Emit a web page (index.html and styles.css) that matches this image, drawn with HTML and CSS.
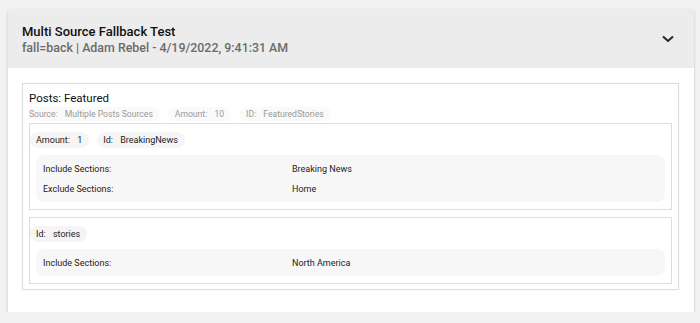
FILE: index.html
```html
<!DOCTYPE html>
<html lang="en">
<head>
    <meta charset="UTF-8">
    <title>Multi Source Fallback Test</title>
    <link rel="stylesheet" href="styles.css">
</head>
<body>
    <div class="card">
        <div class="card-header">
            <div class="titles">
                <h1>Multi Source Fallback Test</h1>
                <p>fall=back | Adam Rebel - 4/19/2022, 9:41:31 AM</p>
            </div>
            <svg class="chevron" width="12" height="8" viewBox="0 0 12 8">
                <path d="M1 1.5 L6 6 L11 1.5" fill="none" stroke="#222" stroke-width="2"/>
            </svg>
        </div>

        <div class="card-body">
            <div class="posts">
                <div class="posts-title">Posts: Featured</div>
                <div class="meta">
                    <span class="meta-chip">Source: <b>Multiple Posts Sources</b></span>
                    <span class="meta-chip">Amount: <b>10</b></span>
                    <span class="meta-chip">ID: <b>FeaturedStories</b></span>
                </div>

                <div class="source">
                    <div class="chips">
                        <span class="chip">Amount: <b>1</b></span>
                        <span class="chip">Id: <b>BreakingNews</b></span>
                    </div>
                    <div class="sections">
                        <div class="row"><span>Include Sections:</span><span>Breaking News</span></div>
                        <div class="row"><span>Exclude Sections:</span><span>Home</span></div>
                    </div>
                </div>

                <div class="source">
                    <div class="chips">
                        <span class="chip">Id: <b>stories</b></span>
                    </div>
                    <div class="sections">
                        <div class="row"><span>Include Sections:</span><span>North America</span></div>
                    </div>
                </div>
            </div>
        </div>
    </div>
</body>
</html>
```

FILE: styles.css
```css
body {
    margin: 0;
    padding: 10px 6px 0 8px;
    background: #f2f2f2;
    font-family: Roboto, "Liberation Sans", sans-serif;
    color: #222;
}

.card {
    background: #fff;
    box-shadow: 0 1px 3px rgba(0, 0, 0, 0.18);
}

.card-header {
    display: flex;
    align-items: center;
    justify-content: space-between;
    height: 58px;
    padding: 0 20px 0 14px;
    background: #ececec;
}

.card-header h1 {
    margin: 0;
    font-size: 13px;
    font-weight: 500;
    line-height: 16px;
    color: #111;
}

.card-header p {
    margin: 0;
    font-size: 12.4px;
    font-weight: 500;
    line-height: 15px;
    color: #6b6b6b;
}

.chevron {
    display: block;
}

.card-body {
    padding: 15px 15px 22px 14px;
}

.posts {
    border: 1px solid #ddd;
    box-shadow: 0 0 1px rgba(0, 0, 0, 0.08);
    padding: 6px 6px 5px 6px;
}

.posts-title {
    font-size: 11.5px;
    line-height: 16px;
    color: #111;
}

.meta {
    display: flex;
    gap: 8px;
    margin: 1px 0 2px;
}

.meta-chip {
    background: #fafafa;
    border-radius: 8px;
    padding: 0 7px 0 0;
    font-size: 8.6px;
    line-height: 14px;
    color: #999;
}

.meta-chip + .meta-chip {
    padding-left: 7px;
}

.meta-chip b,
.chip b {
    font-weight: 400;
    margin-left: 5px;
}

.source {
    border: 1px solid #ddd;
    padding: 8px 6px 7px 0;
}

.source + .source {
    margin-top: 7px;
}

.chips {
    display: flex;
    gap: 8px;
    margin-bottom: 7px;
}

.chip {
    background: #f5f5f5;
    border-radius: 8px;
    padding: 0 7px 0 6px;
    font-size: 9px;
    line-height: 16px;
    color: #222;
}

.sections {
    margin-left: 6px;
    background: #f7f7f7;
    border-radius: 8px;
    padding: 4px 7px 3px;
}

.source + .source .sections {
    padding-bottom: 3px;
}

.row {
    display: grid;
    grid-template-columns: 249px 1fr;
    font-size: 9px;
    line-height: 20px;
    color: #222;
}
```
